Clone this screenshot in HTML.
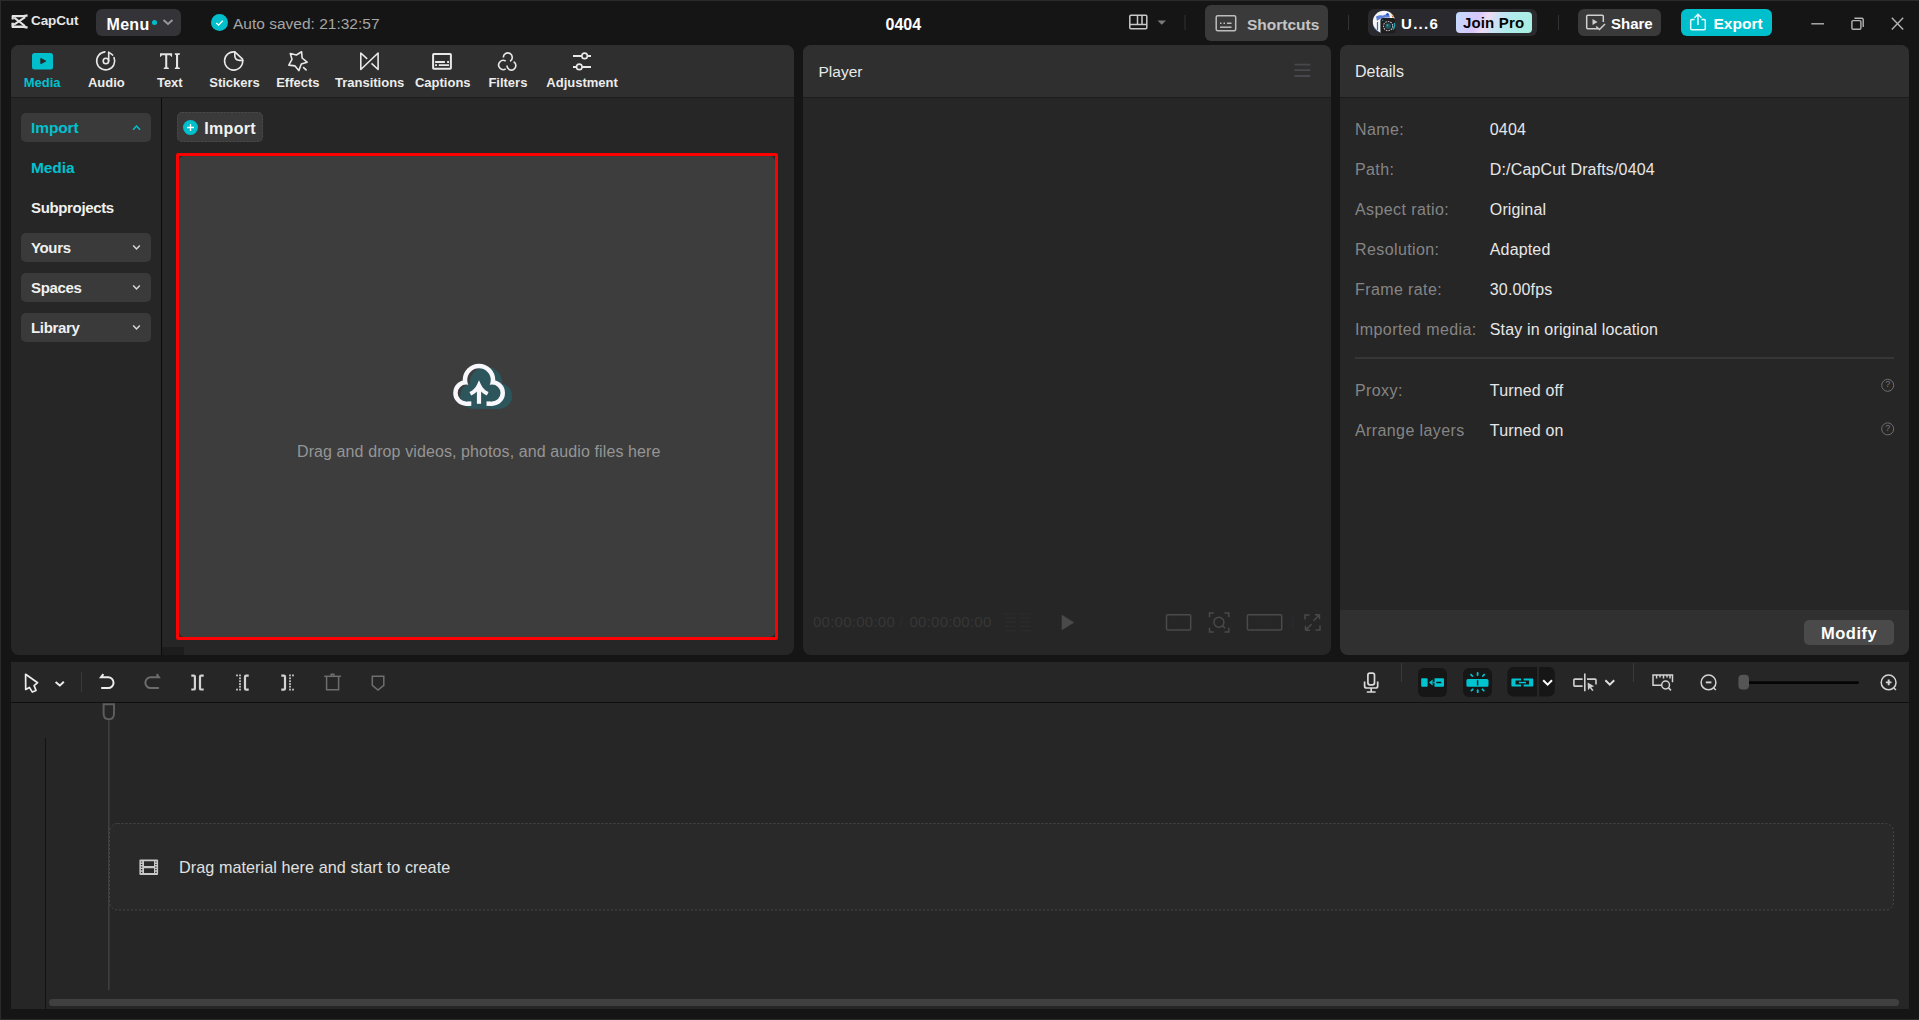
<!DOCTYPE html>
<html><head><meta charset="utf-8">
<style>
*{box-sizing:border-box;margin:0;padding:0}
html,body{width:1919px;height:1020px;overflow:hidden;background:#151515;font-family:"Liberation Sans",sans-serif;}
.a{position:absolute}
.t{position:absolute;white-space:pre;line-height:1}
.b{font-weight:bold}
svg{position:absolute;overflow:visible}
</style></head><body>
<!-- window frame -->
<div class="a" style="left:0;top:0;width:1919px;height:1px;background:#2b2b2b"></div>
<div class="a" style="left:0;top:0;width:1px;height:1020px;background:#2b2b2b"></div>
<div class="a" style="left:0;top:1019px;width:1919px;height:1px;background:#2b2b2b"></div>

<!-- ============ TOP BAR ============ -->
<div id="topbar">
  <!-- logo -->
  <svg style="left:0;top:0" width="100" height="45" viewBox="0 0 100 45">
    <g fill="none" stroke="#e4e4e4" stroke-linejoin="round" stroke-linecap="butt">
      <path d="M12.7 19.6 V16.1 H23.6 L27.6 15.3" stroke-width="2.2"/>
      <path d="M12.7 22.8 V26.7 H23.6 L27.6 27.6" stroke-width="2.5"/>
      <path d="M14.2 17.6 L25 26" stroke-width="2"/>
      <path d="M25.2 17.2 L14 24.6" stroke-width="2"/>
    </g>
  </svg>
  <div class="t b" style="left:31px;top:13.9px;font-size:13.5px;color:#e6e6e6;letter-spacing:-0.1px">CapCut</div>

  <!-- menu -->
  <div class="a" style="left:96px;top:9px;width:85px;height:27px;background:#333338;border-radius:6px"></div>
  <div class="t b" style="left:106.5px;top:16.5px;font-size:16px;color:#fff;letter-spacing:0.3px">Menu</div>
  <div class="a" style="left:152px;top:20px;width:5px;height:5px;border-radius:50%;background:#00bfcc"></div>
  <svg style="left:0;top:0" width="200" height="45"><path d="M163.5 20 L168 24 L172.5 20" fill="none" stroke="#9a9a9a" stroke-width="1.8"/></svg>

  <!-- auto saved -->
  <div class="a" style="left:211px;top:14px;width:17px;height:17px;border-radius:50%;background:#00bfcc"></div>
  <svg style="left:0;top:0" width="240" height="45"><path d="M216.2 23 L218.6 25 L222.8 20.8" fill="none" stroke="#fff" stroke-width="1.3"/></svg>
  <div class="t" style="left:233px;top:15.9px;font-size:15.5px;color:#a6a6a6">Auto saved: 21:32:57</div>

  <!-- title -->
  <div class="t b" style="left:885.5px;top:16.5px;font-size:16px;color:#fff">0404</div>

  <!-- layout icon -->
  <svg style="left:0;top:0" width="1919" height="45">
    <g fill="none" stroke="#c8c8c8" stroke-width="1.5">
      <rect x="1129.8" y="15.3" width="17" height="13.5" rx="1"/>
      <path d="M1129.8 24.5 H1146.8 M1137.5 15.3 V24.5 M1142 15.3 V24.5"/>
    </g>
    <path d="M1157.5 20.5 H1166 L1161.75 24.8 Z" fill="#7a7a7a"/>
    <rect x="1184.5" y="15" width="1" height="15" fill="#333"/>
    <rect x="1348" y="15" width="1" height="15" fill="#333"/>
    <rect x="1558" y="15" width="1" height="15" fill="#333"/>
  </svg>

  <!-- shortcuts -->
  <div class="a" style="left:1205px;top:5px;width:123px;height:36px;background:#3a3a3a;border-radius:6px"></div>
  <svg style="left:0;top:0" width="1919" height="45">
    <g fill="none" stroke="#bdbdbd" stroke-width="1.5">
      <rect x="1216.2" y="15.7" width="19.5" height="15" rx="1.5"/>
      <path d="M1220 27.2 H1231.5"/>
      <path d="M1220 23.2 H1221.5 M1223.5 23.2 H1225 M1227 23.2 H1231.5"/>
    </g>
  </svg>
  <div class="t b" style="left:1247px;top:16.9px;font-size:15.5px;color:#c4c4c4">Shortcuts</div>

  <!-- account -->
  <div class="a" style="left:1368px;top:9px;width:169px;height:27px;background:#2a2a2e;border-radius:6px"></div>
  <svg style="left:0;top:0" width="1919" height="45">
    <defs><clipPath id="avc"><circle cx="1384" cy="21.9" r="11.2"/></clipPath></defs>
    <circle cx="1384" cy="21.9" r="11.2" fill="#f6f6f8"/>
    <g clip-path="url(#avc)">
      <path d="M1376 16.5 Q1380 14.5 1383 15.5 Q1386 13.5 1389 14 L1390 17.5 Q1385 17 1381 18.5 Q1378 19.5 1377 21 Z" fill="#5b7fd6"/>
      <circle cx="1387.5" cy="14.2" r="1.2" fill="#2a50d0"/>
      <path d="M1390 13 Q1393 14.5 1395 17 L1392 17.5 Z" fill="#eadf9a"/>
      <circle cx="1393" cy="16.5" r="1" fill="#c8602a"/>
      <path d="M1377.5 22 V30" stroke="#2a70c0" stroke-width="1.2"/>
      <path d="M1374 27 Q1376 31 1379 32" stroke="#3a7ac8" stroke-width="1" fill="none"/>
    </g>
    <rect x="1380.4" y="17.9" width="15.2" height="15.7" rx="2.5" fill="#1e1e1e"/>
    <circle cx="1388.1" cy="26.1" r="4.6" fill="none" stroke="#bdbdbd" stroke-width="1.1" stroke-dasharray="1.6 1"/>
    <circle cx="1388.1" cy="26.1" r="2.9" fill="#1f5560"/>
    <circle cx="1387.4" cy="25.3" r="1" fill="#4a9aa8"/>
    <path d="M1394.3 23 Q1395.5 26 1393 29.5" stroke="#1aa0b8" stroke-width="1.4" fill="none"/>
    <circle cx="1382.7" cy="20.3" r="0.6" fill="#3ab0c0"/>
  </svg>
  <div class="t b" style="left:1401px;top:16px;font-size:15px;color:#fff;letter-spacing:1.3px">U...6</div>
  <div class="a" style="left:1456px;top:12px;width:76px;height:21px;border-radius:4px;background:linear-gradient(112deg,#c4dcff 0%,#d6c6fb 28%,#efdcf2 40%,#cfe0f6 50%,#b0ecec 68%,#a6eee0 100%)"></div>
  <div class="t b" style="left:1463px;top:15.2px;font-size:15px;color:#050505;letter-spacing:0.15px">Join Pro</div>

  <!-- share -->
  <div class="a" style="left:1578px;top:9px;width:83px;height:27px;background:#3a3a3a;border-radius:6px"></div>
  <svg style="left:0;top:0" width="1919" height="45">
    <g fill="none" stroke="#d0d0d0" stroke-width="1.5">
      <path d="M1598.5 28.8 H1587.7 a1 1 0 0 1 -1 -1 V16.2 a1 1 0 0 1 1 -1 H1602.3 a1 1 0 0 1 1 1 V22"/>
      <path d="M1596.2 26.5 L1599.5 29.5 L1605 24"/>
    </g>
    <path d="M1592.5 19 L1597.5 22 L1592.5 25 Z" fill="#d0d0d0"/>
  </svg>
  <div class="t b" style="left:1611px;top:16px;font-size:15px;color:#fff">Share</div>

  <!-- export -->
  <div class="a" style="left:1681px;top:9px;width:91px;height:27px;background:#00bfcd;border-radius:6px"></div>
  <svg style="left:0;top:0" width="1919" height="45">
    <g fill="none" stroke="#e8fbfc" stroke-width="1.5">
      <path d="M1694.5 19.5 H1692 a1.3 1.3 0 0 0 -1.3 1.3 V28.5 a1.3 1.3 0 0 0 1.3 1.3 H1704 a1.3 1.3 0 0 0 1.3 -1.3 V20.8 a1.3 1.3 0 0 0 -1.3 -1.3 H1701.5"/>
      <path d="M1698 25 V14.5 M1694.5 17.8 L1698 14.3 L1701.5 17.8"/>
    </g>
  </svg>
  <div class="t b" style="left:1713.5px;top:15.8px;font-size:15.5px;color:#fff">Export</div>

  <!-- window controls -->
  <svg style="left:0;top:0" width="1919" height="45">
    <g fill="none" stroke="#b4b4b4" stroke-width="1.4">
      <path d="M1811.3 23.8 H1824"/>
      <rect x="1851.9" y="20.6" width="9" height="8.7" rx="1.2"/>
      <path d="M1854.4 18.3 H1862 a1.2 1.2 0 0 1 1.2 1.2 V27"/>
      <path d="M1891.8 17.8 L1903.2 29.5 M1903.2 17.8 L1891.8 29.5"/>
    </g>
  </svg>
</div>

<!-- ============ LEFT PANEL ============ -->
<div class="a" style="left:11px;top:45px;width:783px;height:610px;background:#262626;border-radius:8px;overflow:hidden">
  <div class="a" style="left:0;top:0;width:783px;height:52px;background:#2f2f2f"></div>
  <div class="a" style="left:0;top:52px;width:783px;height:1px;background:#1c1c1c"></div>
  <div class="a" style="left:150px;top:53px;width:1px;height:557px;background:#0b0b0b"></div>
  <div class="a" style="left:151px;top:602px;width:22px;height:8px;background:#1d1d1d"></div>
</div>


<!-- left panel content -->
<svg style="left:0;top:0" width="1919" height="1020">
  <!-- Media tab icon -->
  <rect x="32" y="53" width="21" height="16.6" rx="2.5" fill="#00bfcd"/>
  <path d="M40.8 58.4 L45.8 61.1 L40.8 63.7 Z" fill="#2a2526" stroke="#2a2526" stroke-width="0.9" stroke-linejoin="round"/>
  <g fill="none" stroke="#e8e8e8" stroke-width="1.6" stroke-linecap="round" stroke-linejoin="round">
    <!-- audio -->
    <path d="M104.9 51.9 A9 9 0 1 0 114.04 57.5"/>
    <path d="M108.7 52.4 A9 9 0 0 1 112.6 55.07"/>
    <path d="M108.7 52.4 V61"/>
    <circle cx="105.9" cy="61" r="2.7"/>
    <!-- stickers -->
    <path d="M234.8 51.95 A9.1 9.1 0 1 0 242.75 60.4"/>
    <path d="M234.8 51.95 L242.6 59.2"/>
    <path d="M234.8 52.2 V56.2 Q235.3 60.4 239.4 60.4 H242.7"/>
    <!-- effects -->
    <path d="M301.6 51.7 L296.4 55 L290.3 53.5 L292 59.4 L288.8 65.1 L295 65.9 L298.8 70.6 L301.3 64 L307.1 62.2 L302.1 58 Z"/>
    <path d="M303.6 67.6 L306.1 69.9"/>
    <!-- transitions -->
    <path d="M367.2 58.8 L360.8 53 V69.5 L378.1 53 V69.5 L371.5 63.4" stroke-linecap="butt"/>
    <!-- filters -->
    <path d="M503.3 57.4 A4.5 4.5 0 1 1 510.05 61.3" stroke-linecap="butt"/>
    <path d="M505.75 61.1 A4.6 4.6 0 1 0 505.75 68.9" stroke-linecap="butt"/>
    <path d="M506.9 65.6 A4.5 4.5 0 1 0 513.65 61.7" stroke-linecap="butt"/>
    <!-- adjustment -->
    <path d="M573 55.9 H581.8 M587.4 55.9 H591" stroke-width="2" stroke-linecap="butt"/>
    <circle cx="584.6" cy="55.9" r="2.75"/>
    <path d="M573 66.9 H576.5 M582.1 66.9 H591" stroke-width="2" stroke-linecap="butt"/>
    <circle cx="579.3" cy="66.9" r="2.75"/>
  </g>
  <!-- text icon TI -->
  <g fill="#e4e4e4">
    <path d="M160 53.2 H172.1 V56.8 H171.2 Q170.8 55.4 169.8 55.3 H167.25 V67.3 Q168.2 67.4 168.9 68 V69 H163.7 V68 Q164.2 67.4 165.2 67.3 V55.3 H162.3 Q161.2 55.4 160.9 56.8 H160 Z"/>
    <path d="M174.8 53.2 H179.9 V54.2 Q179.4 55 178.1 55.1 V67.2 Q179.4 67.3 179.9 68.1 V69 H174.8 V68.1 Q175.3 67.3 176 67.2 V55.1 Q175.3 55 174.8 54.2 Z"/>
  </g>
  <!-- captions -->
  <g fill="none" stroke="#e8e8e8">
    <rect x="433.1" y="54" width="17.8" height="14.8" rx="0.8" stroke-width="2"/>
    <path d="M435.1 62 H444.9 M447.1 62 H449 M435.1 65.1 H437 M438.8 65.1 H449" stroke-width="1.9"/>
  </g>
</svg>
<div class="t b" style="left:-17.90px;width:120px;text-align:center;top:76.1px;font-size:13px;color:#00c2cf">Media</div>
<div class="t b" style="left:46.30px;width:120px;text-align:center;top:76.1px;font-size:13px;color:#ececec">Audio</div>
<div class="t b" style="left:109.80px;width:120px;text-align:center;top:76.1px;font-size:13px;color:#ececec">Text</div>
<div class="t b" style="left:174.55px;width:120px;text-align:center;top:76.1px;font-size:13px;color:#ececec">Stickers</div>
<div class="t b" style="left:237.90px;width:120px;text-align:center;top:76.1px;font-size:13px;color:#ececec">Effects</div>
<div class="t b" style="left:309.65px;width:120px;text-align:center;top:76.1px;font-size:13px;color:#ececec">Transitions</div>
<div class="t b" style="left:382.80px;width:120px;text-align:center;top:76.1px;font-size:13px;color:#ececec">Captions</div>
<div class="t b" style="left:447.90px;width:120px;text-align:center;top:76.1px;font-size:13px;color:#ececec">Filters</div>
<div class="t b" style="left:522.10px;width:120px;text-align:center;top:76.1px;font-size:13px;color:#ececec">Adjustment</div>

<!-- sidebar -->
<div class="a" style="left:21px;top:113px;width:130px;height:29px;background:#3a3a3a;border-radius:5px"></div>
<div class="a" style="left:21px;top:233px;width:130px;height:29px;background:#3a3a3a;border-radius:5px"></div>
<div class="a" style="left:21px;top:273px;width:130px;height:29px;background:#3a3a3a;border-radius:5px"></div>
<div class="a" style="left:21px;top:313px;width:130px;height:29px;background:#3a3a3a;border-radius:5px"></div>
<div class="t b" style="left:31px;top:119.6px;font-size:15.5px;color:#00c2cf;letter-spacing:-0.1px">Import</div>
<div class="t b" style="left:31px;top:159.6px;font-size:15.5px;color:#00c2cf;letter-spacing:-0.1px">Media</div>
<div class="t b" style="left:31px;top:199.9px;font-size:15px;color:#f0f0f0;letter-spacing:-0.35px">Subprojects</div>
<div class="t b" style="left:31px;top:239.9px;font-size:15px;color:#f0f0f0;letter-spacing:-0.35px">Yours</div>
<div class="t b" style="left:31px;top:279.9px;font-size:15px;color:#f0f0f0;letter-spacing:-0.35px">Spaces</div>
<div class="t b" style="left:31px;top:319.9px;font-size:15px;color:#f0f0f0;letter-spacing:-0.35px">Library</div>
<svg style="left:0;top:0" width="300" height="400">
  <path d="M133 129.8 L136.5 126 L140 129.8" fill="none" stroke="#00c2cf" stroke-width="1.5"/>
  <g fill="none" stroke="#d8d8d8" stroke-width="1.5">
    <path d="M133.2 245.6 L136.5 249 L139.8 245.6"/>
    <path d="M133.2 285.6 L136.5 289 L139.8 285.6"/>
    <path d="M133.2 325.6 L136.5 329 L139.8 325.6"/>
  </g>
</svg>

<!-- import button -->
<div class="a" style="left:177px;top:112px;width:86px;height:30px;background:#3a3a3a;border-radius:5px"></div>
<svg style="left:0;top:0" width="300" height="200"><rect x="177.5" y="112.5" width="85" height="29" rx="4.5" fill="none" stroke="#4a4a4a" stroke-width="1" stroke-dasharray="2 1.5"/></svg>
<div class="a" style="left:183px;top:120px;width:15px;height:15px;border-radius:50%;background:#00bfcd"></div>
<svg style="left:0;top:0" width="300" height="200"><path d="M190.5 124 V131 M187 127.5 H194" stroke="#fff" stroke-width="1.3" fill="none"/></svg>
<div class="t b" style="left:204.3px;top:121.1px;font-size:16px;color:#f2f2f2;letter-spacing:0.3px">Import</div>

<!-- drop zone -->
<div class="a" style="left:179px;top:156px;width:596px;height:481px;background:#3d3d3d;border-radius:5px"></div>
<div class="a" style="left:176px;top:153px;width:602px;height:487px;border:3px solid #ff0000;border-radius:2px"></div>
<svg style="left:0;top:0" width="800" height="700">
  <defs>
    <mask id="cm" maskUnits="userSpaceOnUse" x="0" y="0" width="800" height="700">
      <rect x="0" y="0" width="800" height="700" fill="#fff"/>
      <g fill="#000">
        <circle cx="479" cy="380" r="11.75"/>
        <circle cx="466.2" cy="392.9" r="8.5"/>
        <circle cx="492" cy="392.9" r="8.5"/>
        <rect x="466.2" y="385" width="25.8" height="16.4"/>
        <path d="M471.3 398 L486.5 398 L486.5 410 L471.3 410 Z"/>
      </g>
    </mask>
  </defs>
  <g fill="#2d565c" transform="translate(7,3)">
    <circle cx="479" cy="380" r="16.25"/>
    <circle cx="466.2" cy="392.9" r="13"/>
    <circle cx="492" cy="392.9" r="13"/>
    <rect x="466.2" y="392.9" width="25.8" height="13"/>
  </g>
  <g fill="#f8f8fc" mask="url(#cm)">
    <circle cx="479" cy="380" r="16.25"/>
    <circle cx="466.2" cy="392.9" r="13"/>
    <circle cx="492" cy="392.9" r="13"/>
    <rect x="466.2" y="392.9" width="25.8" height="13"/>
  </g>
  <rect x="476.9" y="386" width="4.2" height="17.8" fill="#f8f8fc"/>
  <path d="M470.3 393.8 Q476.3 391 479 385 Q481.7 391 487.7 393.8" fill="none" stroke="#f8f8fc" stroke-width="4"/>
</svg>
<div class="t" style="left:297px;top:443.9px;font-size:16px;color:#959595;letter-spacing:0.1px">Drag and drop videos, photos, and audio files here</div>

<!-- ============ PLAYER PANEL ============ -->
<div class="a" style="left:803px;top:45px;width:528px;height:610px;background:#262626;border-radius:8px;overflow:hidden">
  <div class="a" style="left:0;top:0;width:528px;height:52px;background:#2f2f2f"></div>
  <div class="a" style="left:0;top:52px;width:528px;height:1px;background:#1c1c1c"></div>
</div>


<!-- player content -->
<div class="t" style="left:818.5px;top:64px;font-size:15.5px;color:#e8e8e8">Player</div>
<svg style="left:0;top:0" width="1919" height="1020">
  <path d="M1294.5 64.6 H1310.3 M1294.5 70.2 H1310.3 M1294.5 76 H1310.3" stroke="#48484c" stroke-width="1.8" fill="none"/>
  <g fill="#2b2b2b">
    <rect x="1004.5" y="613.2" width="11.4" height="1.5"/><rect x="1019.5" y="613.2" width="11.7" height="1.5"/>
    <rect x="1004.5" y="617.3" width="11.4" height="1.5"/><rect x="1019.5" y="617.3" width="11.7" height="1.5"/>
    <rect x="1004.5" y="621.5" width="11.4" height="1.5"/><rect x="1019.5" y="621.5" width="11.7" height="1.5"/>
    <rect x="1004.5" y="625.7" width="11.4" height="1.5"/><rect x="1019.5" y="625.7" width="11.7" height="1.5"/>
    <rect x="1004.5" y="630" width="11.4" height="1.5"/><rect x="1019.5" y="630" width="11.7" height="1.5"/>
  </g>
  <path d="M1062 615.2 L1073.7 622.5 L1062 629.8 Z" fill="#4a4a4a" stroke="#4a4a4a" stroke-width="0.6" stroke-linejoin="round"/>
  <g fill="none" stroke="#4a4a4a" stroke-width="1.5">
    <rect x="1166.5" y="614.7" width="24.2" height="15.4" rx="1"/>
    <rect x="1247.4" y="614.7" width="34.3" height="15.4" rx="1"/>
    <path d="M1209.5 617.3 V613 H1213.8 M1224.5 613 H1228.8 V617.3 M1228.8 627.7 V632 H1224.5 M1213.8 632 H1209.5 V627.7"/>
    <circle cx="1218.9" cy="622.3" r="5"/>
    <path d="M1222.6 625.9 L1225 628.3"/>
    <path d="M1305 619.5 V615 H1309.5 M1320 625.5 V630 H1315.5 M1313.5 620.8 L1319.5 614.8 M1319.5 614.8 H1315 M1319.5 614.8 V619.3 M1311.5 624.2 L1305.5 630.2 M1305.5 630.2 H1310 M1305.5 630.2 V625.7"/>
  </g>
  <rect x="1292.4" y="617" width="1" height="11" fill="#2c2c38"/>
</svg>
<div class="t" style="left:813px;top:614.3px;font-size:15px;color:#373737;letter-spacing:0.25px">00:00:00:00</div>
<div class="t" style="left:899px;top:614.3px;font-size:15px;color:#2c2c2c">/</div>
<div class="t" style="left:909.5px;top:614.3px;font-size:15px;color:#373737;letter-spacing:0.25px">00:00:00:00</div>
<div class="t" style="left:1170px;top:616px;font-size:12px;color:#282828">Full</div>
<div class="t" style="left:1251px;top:616px;font-size:12px;color:#282828">Ratio</div>

<!-- ============ DETAILS PANEL ============ -->
<div class="a" style="left:1340px;top:45px;width:569px;height:610px;background:#262626;border-radius:8px;overflow:hidden">
  <div class="a" style="left:0;top:0;width:569px;height:52px;background:#2f2f2f"></div>
  <div class="a" style="left:0;top:52px;width:569px;height:1px;background:#1c1c1c"></div>
  <div class="a" style="left:0;top:565px;width:569px;height:45px;background:#303030"></div>
</div>


<!-- details content -->
<div class="t" style="left:1355px;top:64px;font-size:16px;color:#e8e8e8">Details</div>
<div class="t" style="left:1355px;top:121.5px;font-size:16px;color:#858585;letter-spacing:0.4px">Name:</div>
<div class="t" style="left:1355px;top:161.5px;font-size:16px;color:#858585;letter-spacing:0.4px">Path:</div>
<div class="t" style="left:1355px;top:201.5px;font-size:16px;color:#858585;letter-spacing:0.4px">Aspect ratio:</div>
<div class="t" style="left:1355px;top:241.5px;font-size:16px;color:#858585;letter-spacing:0.4px">Resolution:</div>
<div class="t" style="left:1355px;top:281.5px;font-size:16px;color:#858585;letter-spacing:0.4px">Frame rate:</div>
<div class="t" style="left:1355px;top:321.5px;font-size:16px;color:#858585;letter-spacing:0.4px">Imported media:</div>
<div class="t" style="left:1489.8px;top:121.5px;font-size:16px;color:#e6e6e6;letter-spacing:0.15px">0404</div>
<div class="t" style="left:1489.8px;top:161.5px;font-size:16px;color:#e6e6e6;letter-spacing:0.15px">D:/CapCut Drafts/0404</div>
<div class="t" style="left:1489.8px;top:201.5px;font-size:16px;color:#e6e6e6;letter-spacing:0.15px">Original</div>
<div class="t" style="left:1489.8px;top:241.5px;font-size:16px;color:#e6e6e6;letter-spacing:0.15px">Adapted</div>
<div class="t" style="left:1489.8px;top:281.5px;font-size:16px;color:#e6e6e6;letter-spacing:0.15px">30.00fps</div>
<div class="t" style="left:1489.8px;top:321.5px;font-size:16px;color:#e6e6e6;letter-spacing:0.15px">Stay in original location</div>
<div class="a" style="left:1355px;top:357px;width:539px;height:2px;background:#363636"></div>
<div class="t" style="left:1355px;top:382.5px;font-size:16px;color:#858585;letter-spacing:0.4px">Proxy:</div>
<div class="t" style="left:1355px;top:422.5px;font-size:16px;color:#858585;letter-spacing:0.4px">Arrange layers</div>
<div class="t" style="left:1489.8px;top:382.5px;font-size:16px;color:#e6e6e6;letter-spacing:0.15px">Turned off</div>
<div class="t" style="left:1489.8px;top:422.5px;font-size:16px;color:#e6e6e6;letter-spacing:0.15px">Turned on</div>
<svg style="left:0;top:0" width="1919" height="1020">
  <g fill="none" stroke="#6e6e6e" stroke-width="1">
    <circle cx="1887.7" cy="385.3" r="6"/>
    <circle cx="1887.7" cy="428.9" r="6"/>
  </g>
</svg>
<div class="t" style="left:1885.2px;top:380.2px;font-size:9px;color:#7a7a7a">?</div>
<div class="t" style="left:1885.2px;top:423.8px;font-size:9px;color:#7a7a7a">?</div>
<div class="a" style="left:1804px;top:620px;width:90px;height:25px;background:#4a4a4a;border-radius:5px"></div>
<div class="t b" style="left:1821px;top:625.3px;font-size:16.5px;color:#fff;letter-spacing:0.5px">Modify</div>

<!-- ============ TIMELINE PANEL ============ -->
<div class="a" style="left:11px;top:662px;width:1898px;height:347px;background:#262626">
  <div class="a" style="left:0;top:40px;width:1898px;height:1px;background:#0f0f0f"></div>
</div>


<!-- timeline content -->
<svg style="left:0;top:0" width="1919" height="1020">
  <g fill="none" stroke="#ececec" stroke-width="1.7" stroke-linejoin="round">
    <path d="M25.6 674.3 L25.7 689.5 L29.4 687.4 L32.35 692.1 L36 690.4 L34.1 685.6 L37.6 682.7 Z"/>
    <path d="M55.6 682.1 L59.8 685.6 L63.8 681.7" stroke-width="2"/>
    <path d="M103.4 674.2 L101 677.3 H108.2 A5.35 5.35 0 0 1 108.2 688 H101.2" stroke-width="2" stroke-linejoin="miter"/>
  </g>
  <rect x="81" y="672.3" width="1" height="19.3" fill="#3a3a3a"/>
  <path d="M156.7 674.2 L158.9 677.3 H150.7 A5.35 5.35 0 0 0 150.7 688 H158.9" fill="none" stroke="#6c6c6c" stroke-width="2"/>
  <g fill="none" stroke="#d2d2d2" stroke-width="2.2">
    <path d="M191.3 675.7 H193.8 Q194.9 675.7 194.9 676.8 V688.4 Q194.9 689.5 193.8 689.5 H191.3"/>
    <path d="M203.7 675.7 H201.1 Q200 675.7 200 676.8 V688.4 Q200 689.5 201.1 689.5 H203.7"/>
    <path d="M248.7 675.7 H246.1 Q245 675.7 245 676.8 V688.5 Q245 689.6 246.1 689.6 H248.7"/>
    <path d="M281.3 675.7 H283.9 Q285 675.7 285 676.8 V688.5 Q285 689.6 283.9 689.6 H281.3"/>
  </g>
  <g fill="#b4b4b4">
    <rect x="236" y="674.5" width="2" height="1.8"/><rect x="239" y="674.5" width="2" height="1.8"/>
    <rect x="239" y="677.4" width="2" height="1.8"/><rect x="239" y="680.3" width="2" height="1.8"/>
    <rect x="239" y="683.1" width="2" height="1.8"/><rect x="239" y="685.8" width="2" height="1.8"/>
    <rect x="236" y="688.7" width="2" height="1.8"/><rect x="239" y="688.7" width="2" height="1.8"/>
    <rect x="292" y="674.5" width="2" height="1.8"/><rect x="289" y="674.5" width="2" height="1.8"/>
    <rect x="289" y="677.4" width="2" height="1.8"/><rect x="289" y="680.3" width="2" height="1.8"/>
    <rect x="289" y="683.1" width="2" height="1.8"/><rect x="289" y="685.8" width="2" height="1.8"/>
    <rect x="292" y="688.7" width="2" height="1.8"/><rect x="289" y="688.7" width="2" height="1.8"/>
  </g>
  <g fill="none" stroke="#6e6e6e" stroke-width="1.5">
    <path d="M324.2 676.3 H341"/>
    <path d="M331.2 676 V674.2 H333.8 V676"/>
    <path d="M326.6 676.3 V689.8 H338.6 V676.3"/>
    <path d="M372.3 676.3 H383.8 V685.3 L378 690 L372.3 685.3 Z"/>
  </g>
  <!-- right side -->
  <g fill="none" stroke="#dadada" stroke-width="1.7">
    <rect x="1367.9" y="673.2" width="6.6" height="11.6" rx="2"/>
    <path d="M1364.6 681.5 V686 Q1364.6 688 1366.6 688 H1375.7 Q1377.7 688 1377.7 686 V681.5"/>
    <path d="M1371.2 688 V691.8 M1366.8 692 H1375.6"/>
  </g>
  <rect x="1401" y="663" width="1" height="19" fill="#3a3a3a"/>
  <rect x="1633" y="663" width="1" height="19" fill="#3a3a3a"/>
  <rect x="1418" y="668" width="29" height="29" rx="6" fill="#161616"/>
  <rect x="1463" y="668" width="29" height="29" rx="6" fill="#161616"/>
  <path d="M1513.3 667.1 H1537 V696.5 H1513.3 a6 6 0 0 1 -6 -6 V673.1 a6 6 0 0 1 6 -6 Z" fill="#161616"/>
  <path d="M1539.2 667.1 H1548.8 a6 6 0 0 1 6 6 V690.5 a6 6 0 0 1 -6 6 H1539.2 Z" fill="#161616"/>
  <g fill="#00c4d0">
    <rect x="1421.2" y="678.2" width="6.4" height="8.5" rx="1"/>
    <path d="M1434.5 678.2 H1443 a1 1 0 0 1 1 1 V685.7 a1 1 0 0 1 -1 1 H1434.5 Z M1436.3 681.8 V683.3 H1441.3 V681.8 Z" fill-rule="evenodd"/>
    <path d="M1429 682.5 L1432.6 679.6 V685.4 Z"/>
    <rect x="1433.2" y="681.9" width="1.3" height="1.3"/>
    <path d="M1466.4 680.4 a1.5 1.5 0 0 1 1.5 -1.5 H1487 a1.5 1.5 0 0 1 1.5 1.5 V685.2 a1.5 1.5 0 0 1 -1.5 1.5 H1467.9 a1.5 1.5 0 0 1 -1.5 -1.5 Z M1476.9 680.2 V685.6 H1478.3 V680.2 Z" fill-rule="evenodd"/>
    <path d="M1511.4 679.4 a1 1 0 0 1 1 -1 H1521 V680.4 H1515.5 V684.5 H1521 V686.5 H1512.4 a1 1 0 0 1 -1 -1 Z"/>
    <path d="M1533.25 679.4 a1 1 0 0 0 -1 -1 H1523.6 V680.4 H1529.1 V684.5 H1523.6 V686.5 H1532.25 a1 1 0 0 0 1 -1 Z"/>
    <rect x="1518.9" y="681.8" width="7.1" height="1.5"/>
  </g>
  <g stroke="#00c4d0" stroke-width="1.8" stroke-linecap="round">
    <path d="M1477.6 673 V675"/><path d="M1471 674.6 L1472.3 676"/><path d="M1484.2 674.6 L1482.9 676"/>
    <path d="M1477.7 690.2 V692.2"/><path d="M1471.4 690.6 L1472.7 689.3"/><path d="M1483.8 690.6 L1482.5 689.3"/>
  </g>
  <g fill="none" stroke="#ffffff" stroke-width="2">
    <path d="M1543.2 680.3 L1547.6 684.6 L1552 680.3"/>
  </g>
  <g fill="none" stroke="#d0d0d0" stroke-width="1.6">
    <path d="M1582.6 679.1 H1574.7 a0.8 0.8 0 0 0 -0.8 0.8 V685.3 a0.8 0.8 0 0 0 0.8 0.8 H1582.6"/>
    <path d="M1584.8 673.4 V691.2"/>
    <path d="M1587 679.1 H1595.2 a0.8 0.8 0 0 1 0.8 0.8 V684.6"/>
    <path d="M1605.4 680.3 L1609.8 684.6 L1614.2 680.3" stroke="#e0e0e0" stroke-width="2"/>
  </g>
  <path d="M1587.6 682.6 L1594.2 686.3 L1591.2 687.2 L1593.6 690.2 L1592.2 691 L1589.9 688 L1588 690.3 Z" fill="#d0d0d0"/>
  <g fill="none" stroke="#d4d4d4" stroke-width="1.5">
    <path d="M1661.2 685.2 H1653 V675 H1672.5 V682.3"/>
    <path d="M1656.6 675 V678.5 M1660 675 V677.6 M1663.5 675 V678.5 M1667 675 V677.6 M1670 675 V678.5"/>
    <circle cx="1665.6" cy="685" r="3.9"/>
    <path d="M1668.5 687.9 L1671 690.4"/>
    <circle cx="1708.5" cy="682.4" r="7.4"/>
    <path d="M1705.8 682.4 H1711.4" stroke-width="1.9"/>
    <path d="M1713.8 688 L1715.8 690"/>
    <circle cx="1888.6" cy="682.4" r="7.4"/>
    <path d="M1885.9 682.4 H1891.5 M1888.7 679.6 V685.2" stroke-width="1.9"/>
    <path d="M1893.9 688 L1895.9 690"/>
  </g>
  <rect x="1748" y="681.3" width="111" height="2.6" rx="1.3" fill="#050505"/>
  <rect x="1738.4" y="674.8" width="10.6" height="14.8" rx="4" fill="#555555"/>
  <!-- playhead -->
  <path d="M103.6 704.2 H114 V713.5 Q114 719.3 108.8 719.3 Q103.6 719.3 103.6 713.5 Z" fill="none" stroke="#5c5c5c" stroke-width="2"/>
  <rect x="108" y="720" width="1.6" height="270" fill="#3e3e3e"/>
  <rect x="45" y="738" width="1" height="271" fill="#121212"/>
  <!-- drop area -->
  <rect x="109.5" y="823.5" width="1784" height="86.5" rx="8" fill="#292929" stroke="#484848" stroke-width="1" stroke-dasharray="2 2"/>
  <!-- film icon -->
  <path fill="#c8c8c8" fill-rule="evenodd" d="M140.4 859.6 H157.1 a1 1 0 0 1 1 1 V873.9 a1 1 0 0 1 -1 1 H140.4 a1 1 0 0 1 -1 -1 V860.6 a1 1 0 0 1 1 -1 Z
    M144 861.3 V866.1 H154 V861.3 Z M144 868.2 V872.9 H154 V868.2 Z
    M140.9 861.4 V862.6 H142.3 V861.4 Z M140.9 863.9 V865.1 H142.3 V863.9 Z M140.9 866.5 V867.7 H142.3 V866.5 Z M140.9 869 V870.2 H142.3 V869 Z M140.9 871.7 V872.9 H142.3 V871.7 Z
    M155.2 861.4 V862.6 H156.6 V861.4 Z M155.2 863.9 V865.1 H156.6 V863.9 Z M155.2 866.5 V867.7 H156.6 V866.5 Z M155.2 869 V870.2 H156.6 V869 Z M155.2 871.7 V872.9 H156.6 V871.7 Z"/>
  <!-- scrollbar -->
  <rect x="49" y="999" width="1850" height="7" rx="3.5" fill="#404040"/>
</svg>
<div class="t" style="left:179px;top:859.2px;font-size:16.2px;color:#e0e0e0;letter-spacing:0.06px">Drag material here and start to create</div>

</body></html>
